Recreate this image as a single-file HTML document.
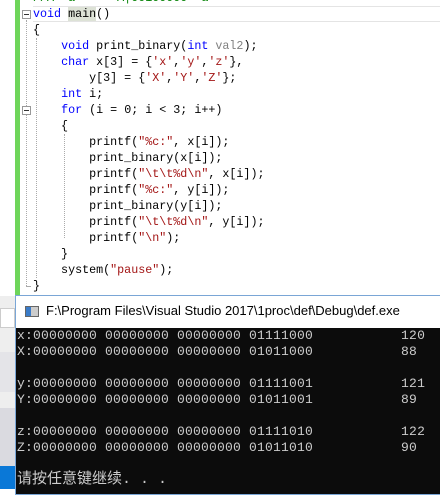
<!DOCTYPE html>
<html><head><meta charset="utf-8"><style>
*{margin:0;padding:0;box-sizing:border-box}
body{width:440px;height:489px;overflow:hidden;background:#fff;position:relative;font-family:"Liberation Mono","Noto Sans CJK SC",monospace}
.code{position:absolute;left:33px;top:-10px;font-size:11.7px;line-height:16px;white-space:pre;color:#000}
.k{color:#0000ff}.s{color:#a31515}.g{color:#008000}.gr{color:#808080}
.bar{position:absolute;left:15px;top:0;width:5px;height:296px;background:#6ed55a}
.gut{position:absolute;left:26px;width:1px;border-left:1px dotted #aaa}
.box{position:absolute;left:22px;width:9px;height:9px;border:1px solid #999;background:#fff}
.box:after{content:"";position:absolute;left:1px;top:3px;width:5px;height:1px;background:#333}
.con{position:absolute;left:15px;top:295px;width:430px;height:200px;border:1px solid #7aa6d6;background:#0c0c0c}
.title{height:32px;background:#fff;font-family:"Liberation Sans",sans-serif;font-size:13px;color:#000;padding:7px 0 0 30px;position:relative}
.ico{position:absolute;left:9px;top:10px;width:14px;height:11px;border:1px solid #666;background:linear-gradient(90deg,#3a7bc8 0 5px,#ccc 5px)}
.out{color:#ccc;font-family:"Liberation Mono","Noto Sans CJK SC",monospace;font-size:13px;letter-spacing:0.2px;line-height:16px;white-space:pre;padding-left:1px;padding-top:0px}
.cjk{font-size:15px;letter-spacing:0}
.left{position:absolute;left:0;top:296px;width:15px;height:193px;background:#eee}
</style></head><body>
<div class="left">
<div style="position:absolute;top:12px;width:15px;height:20px;background:#fff;border:1px solid #ccc"></div>
<div style="position:absolute;top:56px;width:15px;height:40px;background:#e4e4e8"></div>
<div style="position:absolute;top:112px;width:15px;height:60px;background:#dadae0"></div>
<div style="position:absolute;top:170px;width:15px;height:23px;background:#0a78d7"></div>
</div>
<div class="bar"></div>
<div class="gut" style="top:20px;height:266px"></div>
<div style="position:absolute;left:26px;top:286px;width:5px;border-top:1px solid #aaa"></div>
<div class="gut" style="left:36px;top:38px;height:240px"></div>
<div class="gut" style="left:64px;top:134px;height:104px"></div>
<div class="box" style="top:10px"></div>
<div class="box" style="top:106px"></div>
<div style="position:absolute;left:33px;top:6px;width:410px;height:16px;border-top:1px solid #e4e4e4;border-bottom:1px solid #e4e4e4"></div>
<div style="position:absolute;left:68px;top:7px;width:28px;height:14px;background:#dde2d6"></div>
<div class="code"><span class="g">//A  a      A|00100000  a</span>
<span class="k">void</span> main()
{
    <span class="k">void</span> print_binary(<span class="k">int</span> <span class="gr">val2</span>);
    <span class="k">char</span> x[3] = {<span class="s">'x'</span>,<span class="s">'y'</span>,<span class="s">'z'</span>},
        y[3] = {<span class="s">'X'</span>,<span class="s">'Y'</span>,<span class="s">'Z'</span>};
    <span class="k">int</span> i;
    <span class="k">for</span> (i = 0; i &lt; 3; i++)
    {
        printf(<span class="s">"%c:"</span>, x[i]);
        print_binary(x[i]);
        printf(<span class="s">"\t\t%d\n"</span>, x[i]);
        printf(<span class="s">"%c:"</span>, y[i]);
        print_binary(y[i]);
        printf(<span class="s">"\t\t%d\n"</span>, y[i]);
        printf(<span class="s">"\n"</span>);
    }
    system(<span class="s">"pause"</span>);
}</div>
<div class="con">
<div class="title"><div class="ico"></div>F:\Program Files\Visual Studio 2017\1proc\def\Debug\def.exe</div>
<div class="out">x:00000000 00000000 00000000 01111000           120
X:00000000 00000000 00000000 01011000           88

y:00000000 00000000 00000000 01111001           121
Y:00000000 00000000 00000000 01011001           89

z:00000000 00000000 00000000 01111010           122
Z:00000000 00000000 00000000 01011010           90

<span class="cjk">请按任意键继续. . .</span></div>
</div>
</body></html>
